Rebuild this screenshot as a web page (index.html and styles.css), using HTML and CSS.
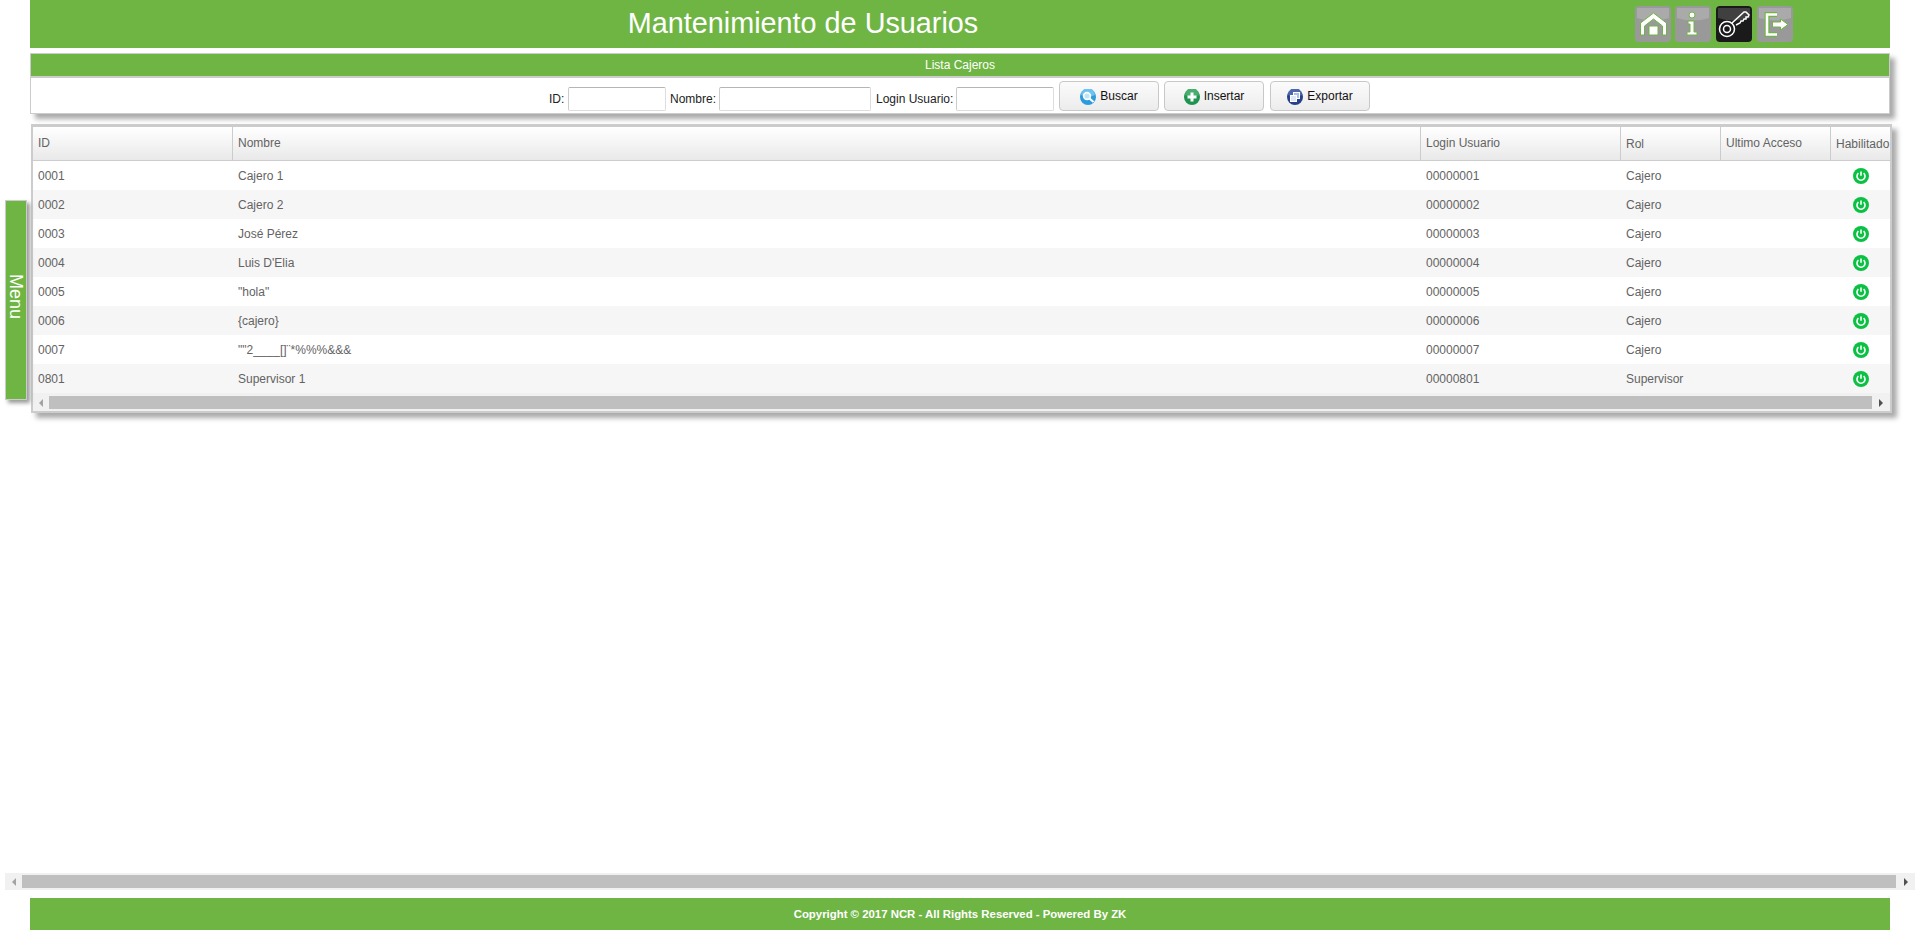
FILE: index.html
```html
<!DOCTYPE html>
<html lang="es">
<head>
    <meta charset="UTF-8">
    <title>Mantenimiento de Usuarios</title>
    <link rel="stylesheet" href="styles.css">
</head>
<body>
    <div class="page">
        <header class="top-bar">
            <h1 class="title">Mantenimiento de Usuarios</h1>
            <nav class="top-nav">
                <a class="nav-btn">
                    <svg viewBox="0 0 36 36" width="36" height="36">
                        <path class="gloss" d="M2 2h32v10q-16 5-32 0z"/>
                        <path class="outlined" d="M5.5 29V17L18.5 7l13 10v12h-4V20l-9-7-9 7v9z"/>
                        <rect class="outlined" x="14" y="20" width="9" height="9"/>
                    </svg>
                </a>
                <a class="nav-btn">
                    <svg viewBox="0 0 36 36" width="36" height="36">
                        <path class="gloss" d="M2 2h32v10q-16 5-32 0z"/>
                        <circle class="outlined" cx="17" cy="9" r="3"/>
                        <path class="outlined" d="M13 15h6v11h3v3H12v-3h3v-8h-2z"/>
                    </svg>
                </a>
                <a class="nav-btn active">
                    <svg viewBox="0 0 36 36" width="36" height="36">
                        <path class="gloss" d="M2 2h32v10q-16 5-32 0z"/>
                        <path class="key" d="M16 17L28 6l2 0 3 3-1 2-2 0 0 2-2 0-1 2-2 0-1 2-4 2"/>
                        <circle class="key" cx="11" cy="23" r="7.5"/>
                        <circle class="key" cx="11" cy="23" r="3.5"/>
                    </svg>
                </a>
                <a class="nav-btn">
                    <svg viewBox="0 0 36 36" width="36" height="36">
                        <path class="gloss" d="M2 2h32v10q-16 5-32 0z"/>
                        <path class="edge" d="M20 8.5H10v20h10"/>
                        <path class="line" d="M20 8.5H10v20h10"/>
                        <path class="outlined" d="M15.5 16h8v-3l7.5 5.5-7.5 5.5v-3h-8z"/>
                    </svg>
                </a>
            </nav>
        </header>

        <main class="content">
            <section class="panel">
                <div class="panel-title">Lista Cajeros</div>
                <div class="panel-body">
                    <label class="field-label label-id">ID:</label>
                    <input class="field field-short" type="text">
                    <label class="field-label label-name">Nombre:</label>
                    <input class="field field-long" type="text">
                    <label class="field-label label-login">Login Usuario:</label>
                    <input class="field field-short" type="text">
                    <button class="btn">
                        <svg viewBox="0 0 16 16" width="16" height="16">
                            <circle cx="8" cy="8" r="8" fill="#2a9bdc"/>
                            <path d="M1 6a7 7 0 0 1 14 0q-7 3-14 0z" fill="#6cc3f0"/>
                            <circle cx="7" cy="7" r="3.4" fill="#bfe4f8" stroke="#fff" stroke-width="1.6"/>
                            <path d="M9.5 9.5l4 3.5" stroke="#fff" stroke-width="2.2"/>
                        </svg>
                        <span>Buscar</span>
                    </button>
                    <button class="btn">
                        <svg viewBox="0 0 16 16" width="16" height="16">
                            <circle cx="8" cy="8" r="8" fill="#1f9350"/>
                            <path d="M1 6a7 7 0 0 1 14 0q-7 3-14 0z" fill="#49ad6f"/>
                            <path d="M8 3.5v9M3.5 8h9" stroke="#fff" stroke-width="3"/>
                        </svg>
                        <span>Insertar</span>
                    </button>
                    <button class="btn">
                        <svg viewBox="0 0 16 16" width="16" height="16">
                            <circle cx="8" cy="8" r="8" fill="#26408c"/>
                            <path d="M1 6a7 7 0 0 1 14 0q-7 3-14 0z" fill="#4f68ad"/>
                            <rect x="6.5" y="3.5" width="6" height="6" fill="#a9bde6" stroke="#fff"/>
                            <rect x="3.5" y="6.5" width="6" height="6" fill="#dfe7f7" stroke="#fff"/>
                        </svg>
                        <span>Exportar</span>
                    </button>
                </div>
            </section>

            <section class="grid">
                <table class="grid-table">
                    <colgroup>
                        <col class="col-id"><col class="col-name"><col class="col-login"><col class="col-role"><col class="col-access"><col class="col-on">
                    </colgroup>
                    <thead>
                        <tr>
                            <th>ID</th>
                            <th>Nombre</th>
                            <th>Login Usuario</th>
                            <th class="low">Rol</th>
                            <th>Ultimo Acceso</th>
                            <th class="low">Habilitado</th>
                        </tr>
                    </thead>
                    <tbody id="rows"></tbody>
                </table>
                <div class="scroll scroll-inner">
                    <span class="arrow arrow-left"></span>
                    <span class="thumb"></span>
                    <span class="arrow arrow-right"></span>
                </div>
            </section>
        </main>

        <div class="scroll scroll-page">
            <span class="arrow arrow-left"></span>
            <span class="thumb"></span>
            <span class="arrow arrow-right"></span>
        </div>

        <footer class="bottom-bar">Copyright © 2017 NCR - All Rights Reserved - Powered By ZK</footer>

        <div class="menu-tab">Menu</div>
    </div>

    <script>
        const cajeros = [
            ['0001', 'Cajero 1', '00000001', 'Cajero'],
            ['0002', 'Cajero 2', '00000002', 'Cajero'],
            ['0003', 'José Pérez', '00000003', 'Cajero'],
            ['0004', "Luis D'Elia", '00000004', 'Cajero'],
            ['0005', '"hola"', '00000005', 'Cajero'],
            ['0006', '{cajero}', '00000006', 'Cajero'],
            ['0007', '""2____[]¨*%%%&&&', '00000007', 'Cajero'],
            ['0801', 'Supervisor 1', '00000801', 'Supervisor'],
        ];

        const powerIcon = '<svg class="power" viewBox="0 0 16 16" width="16" height="16">'
            + '<circle cx="8" cy="8" r="8" fill="#0bc143"/>'
            + '<path d="M5.4 5.2a4 4 0 1 0 5.2 0" fill="none" stroke="#fff" stroke-width="1.6"/>'
            + '<path d="M8 3.4v4.4" stroke="#fff" stroke-width="1.6"/></svg>';

        const body = document.getElementById('rows');
        cajeros.forEach(function (c) {
            const tr = document.createElement('tr');
            c.forEach(function (value) {
                const td = document.createElement('td');
                td.textContent = value;
                tr.appendChild(td);
            });
            tr.insertAdjacentHTML('beforeend', '<td></td><td class="cell-on">' + powerIcon + '</td>');
            body.appendChild(tr);
        });
    </script>
</body>
</html>
```

FILE: styles.css
```css
body {
    margin: 0;
    background: #fff;
    font-family: "Liberation Sans", Arial, sans-serif;
    font-size: 12px;
    color: #636363;
}
.page {
    position: relative;
    display: flex;
    flex-direction: column;
    height: 930px;
    overflow: hidden;
}

/* top bar */
.top-bar {
    display: flex;
    height: 48px;
    margin: 0 30px;
    background: #6fb544;
}
.title {
    width: 1546px;
    margin: 0;
    font-size: 28.8px;
    font-weight: 400;
    line-height: 47px;
    text-align: center;
    color: #fff;
}
.top-nav {
    display: flex;
    gap: 5px;
    margin-left: 59px;
    padding-top: 6px;
}
.nav-btn {
    width: 36px;
    height: 36px;
    border-radius: 4px;
    background: #999;
}
.nav-btn:first-child {
    margin-right: -1px;
}
.nav-btn.active {
    background: #1a1a1a;
}
.nav-btn svg {
    display: block;
}
.gloss {
    fill: #fff;
    opacity: 0.17;
}
.edge {
    fill: none;
    stroke: #6fb544;
    stroke-width: 5;
}
.line {
    fill: none;
    stroke: #fff;
    stroke-width: 2.6;
}
.outlined {
    fill: #fff;
    stroke: #6fb544;
    stroke-width: 1;
}
.key {
    fill: none;
    stroke: #fff;
    stroke-width: 1.5;
}

/* search panel */
.content {
    flex: 1;
}
.panel {
    margin: 5px 30px 0;
    border: 1px solid #ccc;
    box-shadow: 5px 5px 5px #aaa;
}
.panel-title {
    height: 22px;
    border-bottom: 2px solid #ccc;
    background: #6fb544;
    font-size: 12px;
    line-height: 22px;
    text-align: center;
    color: #fff;
}
.panel-body {
    display: flex;
    justify-content: center;
    align-items: flex-end;
    height: 30px;
    padding: 3px 1px 2px 0;
    color: #222;
}
.field-label {
    flex: none;
    line-height: 23px;
    white-space: nowrap;
}
.label-id {
    width: 19px;
}
.label-name {
    width: 49px;
    margin-left: 4px;
}
.label-login {
    width: 80px;
    margin-left: 5px;
}
.field {
    flex: none;
    box-sizing: border-box;
    height: 24px;
    margin: 0;
    padding: 0 4px;
    border: 1px solid #ddd;
    border-top-color: #b5b5b5;
    border-left-color: #ccc;
    border-radius: 2px;
    background: #fff;
}
.field-short {
    width: 98px;
}
.field-long {
    width: 152px;
}
.btn {
    display: flex;
    flex: none;
    justify-content: center;
    align-items: center;
    gap: 4px;
    box-sizing: border-box;
    width: 100px;
    height: 30px;
    margin: 0 0 0 5px;
    padding: 0;
    border: 1px solid #c8c8c8;
    border-radius: 4px;
    background: linear-gradient(#fbfbfb, #ececec);
    font-family: inherit;
    font-size: 12px;
    color: #111;
}
.btn:last-child {
    margin-left: 6px;
}
.btn svg {
    margin-top: 2px;
}

/* users grid */
.grid {
    margin: 10px 28px 0 31px;
    border: 2px solid #ccc;
    border-top-width: 3px;
    box-shadow: 5px 5px 5px #aaa;
}
.grid-table {
    width: 100%;
    table-layout: fixed;
    border-collapse: separate;
    border-spacing: 0;
}
.col-id { width: 200px; }
.col-login { width: 200px; }
.col-role { width: 100px; }
.col-access { width: 110px; }
.col-on { width: 59px; }
.grid-table th {
    height: 34px;
    padding: 0 0 1px 5px;
    box-sizing: border-box;
    overflow: hidden;
    border-right: 1px solid #ccc;
    border-bottom: 1px solid #ccc;
    background: linear-gradient(#fff, #e9e9e9);
    font-weight: 400;
    text-align: left;
    white-space: nowrap;
}
.grid-table th:last-child {
    border-right: 0;
}
.grid-table th.low {
    padding-top: 1px;
    padding-bottom: 0;
}
.grid-table td {
    height: 29px;
    box-sizing: border-box;
    padding: 0 0 0 5px;
    white-space: nowrap;
}
.grid-table tbody tr:nth-child(even) td {
    background: #f6f6f6;
}
.grid-table td.cell-on {
    padding: 0;
    text-align: center;
}
.power {
    display: block;
    margin: 0 auto 0 22px;
}

/* scrollbars */
.scroll {
    display: flex;
    align-items: center;
    background: #f1f1f1;
}
.thumb {
    flex: 1;
    height: 13px;
    background: #bfbfbf;
}
.arrow {
    flex: none;
    display: flex;
    justify-content: center;
    width: 16px;
}
.arrow::before {
    content: "";
    border-top: 4px solid transparent;
    border-bottom: 4px solid transparent;
}
.arrow-left::before {
    border-right: 4px solid #a3a3a3;
}
.arrow-right::before {
    border-left: 4px solid #505050;
}
.scroll-inner {
    height: 18px;
    padding: 2px 0 1px;
    box-sizing: border-box;
}
.scroll-inner .arrow-right {
    width: 18px;
}
.scroll-page {
    flex: none;
    height: 17px;
    margin: 0 5px;
}
.scroll-page .arrow-left {
    width: 17px;
}
.scroll-page .arrow-right {
    width: 19px;
}

/* footer and side tab */
.bottom-bar {
    flex: none;
    height: 32px;
    margin: 8px 30px 0;
    background: #6fb544;
    font-size: 11.4px;
    font-weight: 700;
    line-height: 32px;
    text-align: center;
    color: #fff;
}
.menu-tab {
    position: absolute;
    top: 200px;
    left: 5px;
    box-sizing: border-box;
    width: 22px;
    height: 200px;
    padding-right: 1px;
    padding-bottom: 6px;
    border: 1px solid #ccc;
    background: #6fb544;
    box-shadow: 3px 3px 4px #999;
    writing-mode: vertical-rl;
    font-size: 18px;
    line-height: 18px;
    text-align: center;
    color: #fff;
}
```
